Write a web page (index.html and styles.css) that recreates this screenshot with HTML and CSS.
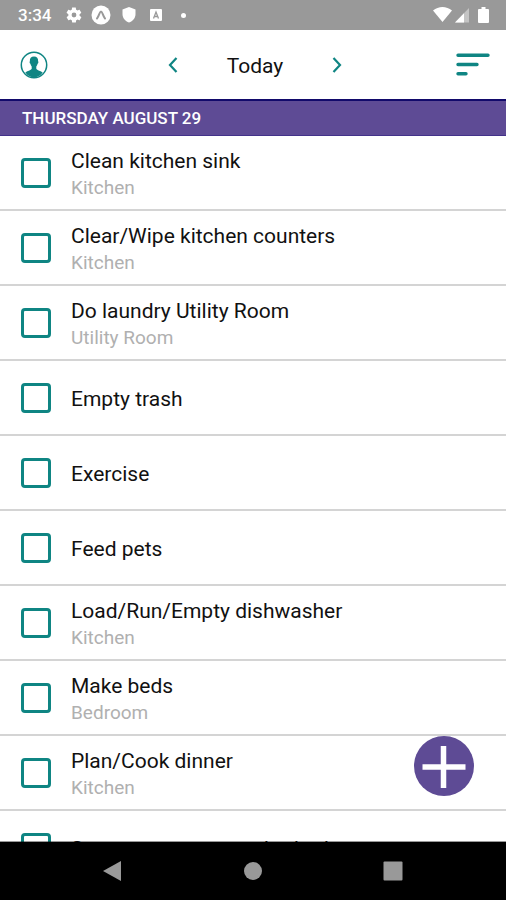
FILE: index.html
```html
<!DOCTYPE html>
<html lang="en">
<head>
  <meta charset="UTF-8" />
  <meta name="viewport" content="width=device-width, initial-scale=1.0"/>
  <title>Today</title>
  <link rel="stylesheet" href="styles.css">
</head>
<body>

  <!-- STATUS BAR -->
  <div class="status-bar">
    <span class="time">3:34</span>
    <svg class="gear" width="18" height="18" viewBox="0 0 24 24"><path fill="#fff" fill-rule="evenodd" d="M19.4 13c.1-.6.1-1.300 0-2l2.100-1.600c.2-.2.200-.4.100-.6l-2-3.500c-.1-.2-.4-.3-.6-.2l-2.500 1c-.5-.4-1.100-.7-1.700-1l-.4-2.600c0-.3-.2-.5-.5-.5h-4c-.2 0-.4.200-.5.400l-.4 2.700c-.6.200-1.200.600-1.700 1l-2.500-1c-.2-.1-.5 0-.6.200l-2 3.500c-.1.200-.1.500.1.600L4.500 11c-.1.700-.1 1.300 0 2l-2.100 1.600c-.2.200-.2.400-.1.600l2 3.500c.1.200.4.300.6.200l2.500-1c.5.400 1.100.7 1.700 1l.4 2.600c.1.300.3.500.5.500h4c.3 0 .5-.2.500-.4l.4-2.700c.6-.2 1.200-.6 1.700-1l2.500 1c.2.100.5 0 .6-.2l2-3.500c.1-.2.1-.5-.1-.6L19.400 13zM12 15.200a3.200 3.200 0 1 1 0-6.400 3.200 3.200 0 0 1 0 6.400z"/></svg>
    <svg class="expo" width="20" height="20" viewBox="0 0 20 20"><circle cx="10" cy="10" r="9.500" fill="#fff"/><path d="M6 13.500C8 11.500 8.500 6.500 10 6.500s2 5 4 7" fill="none" stroke="#999" stroke-width="2" stroke-linecap="round"/></svg>
    <svg class="shield" width="16" height="18" viewBox="0 0 16 18"><path d="M8 1l6.500 2.500V8c0 4-2.700 7.300-6.500 8.500C4.200 15.300 1.500 12 1.500 8V3.500z" fill="#fff"/></svg>
    <svg class="app" width="14" height="14" viewBox="0 0 14 14"><rect x="1" y="1" width="12" height="12" rx="1" fill="#fff"/><path d="M4.500 10.500L7 4l2.500 6.500M5.500 8.500h3" fill="none" stroke="#999" stroke-width="1.300"/></svg>
    <span class="dot"></span>
    <svg class="signals" width="58" height="18" viewBox="0 0 58 18"><path d="M1 4.500C6.500-.2 14.500-.2 20 4.500L10.500 16z" fill="#fff"/><path d="M23 16.500L37 2v14.500z" fill="#c4c4c4"/><path d="M23 16.500L32 7.200v9.300z" fill="#fff"/><path d="M49.500 1h4v2h2.500q1 0 1 1v12q0 1-1 1h-9q-1 0-1-1V4q0-1 1-1h2.500z" fill="#fff"/></svg>
  </div>

  <header>
    <button class="icon-btn" aria-label="Profile">
      <svg width="28" height="28" viewBox="0 0 28 28"><circle cx="14" cy="14" r="12.700" fill="none" stroke="#0f8583" stroke-width="1.500"/><path d="M14 5.500c-2.900 0-4.400 1.800-4.100 4.700-.6.300-.3 2.300.5 2.600.2 1.200.7 2 1.300 2.600v2.300c-.7 1.700-4.600 2.100-6.400 3.700A12 12 0 0 0 14 26.500a12 12 0 0 0 8.700-5.100c-1.800-1.600-5.700-2-6.400-3.700v-2.300c.6-.6 1.100-1.400 1.300-2.600.8-.3 1.100-2.300.5-2.600.3-2.900-1.200-4.700-4.100-4.700z" fill="#0f8583"/></svg>
    </button>
    <div class="day-picker">
      <button class="icon-btn" aria-label="Previous day">
        <svg width="10" height="18" viewBox="0 0 10 18"><path d="M8.500 2L2 9l6.500 7" fill="none" stroke="#0f8583" stroke-width="2.200"/></svg>
      </button>
      <h1>Today</h1>
      <button class="icon-btn" aria-label="Next day">
        <svg width="10" height="18" viewBox="0 0 10 18"><path d="M1.500 2L8 9l-6.500 7" fill="none" stroke="#0f8583" stroke-width="2.200"/></svg>
      </button>
    </div>
    <button class="icon-btn sort" aria-label="Sort">
      <svg width="34" height="24" viewBox="0 0 34 24"><path d="M2 2.200h30M2 11.500h19M2 20.700h8" fill="none" stroke="#0f8583" stroke-width="3.400" stroke-linecap="round"/></svg>
    </button>
  </header>

  <h2 class="date">THURSDAY AUGUST 29</h2>

  <main>
    <ul class="tasks">
      <li><label><input type="checkbox"><span class="text">Clean kitchen sink<small>Kitchen</small></span></label></li>
      <li><label><input type="checkbox"><span class="text">Clear/Wipe kitchen counters<small>Kitchen</small></span></label></li>
      <li><label><input type="checkbox"><span class="text">Do laundry Utility Room<small>Utility Room</small></span></label></li>
      <li><label><input type="checkbox"><span class="text">Empty trash</span></label></li>
      <li><label><input type="checkbox"><span class="text">Exercise</span></label></li>
      <li><label><input type="checkbox"><span class="text">Feed pets</span></label></li>
      <li><label><input type="checkbox"><span class="text">Load/Run/Empty dishwasher<small>Kitchen</small></span></label></li>
      <li><label><input type="checkbox"><span class="text">Make beds<small>Bedroom</small></span></label></li>
      <li><label><input type="checkbox"><span class="text">Plan/Cook dinner<small>Kitchen</small></span></label></li>
      <li><label><input type="checkbox"><span class="text">Sweep master room bathtub</span></label></li>
    </ul>
    <button class="add-btn" aria-label="Add task">
      <svg width="60" height="60" viewBox="0 0 60 60"><path d="M29.500 10v42M8.500 31h43" stroke="#fff" stroke-width="5.500"/></svg>
    </button>
  </main>

  <!-- SYSTEM NAVIGATION -->
  <nav class="system-nav">
    <button class="icon-btn" aria-label="Back"><svg width="20" height="22" viewBox="0 0 20 22"><path d="M0 11L18 1v20z" fill="#999"/></svg></button>
    <button class="icon-btn" aria-label="Home"><svg width="20" height="22" viewBox="0 0 20 22"><circle cx="10" cy="11" r="9" fill="#999"/></svg></button>
    <button class="icon-btn" aria-label="Recent apps"><svg width="20" height="22" viewBox="0 0 20 22"><rect x=".5" y="1.500" width="19" height="19" rx="1" fill="#999"/></svg></button>
  </nav>

</body>
</html>
```
FILE: styles.css
```css
* {
  margin: 0; padding: 0;
  box-sizing: border-box;
  font-family: Roboto, sans-serif;
}

body {
  height: 100vh;
  display: flex;
  flex-direction: column;
  overflow: hidden;
  background-color: white;
  color: #111;
}

svg {
  display: block;
}

.icon-btn {
  background: none;
  border: none;
  cursor: pointer;
}

/* Status bar */
.status-bar {
  flex: none;
  display: flex;
  align-items: center;
  height: 30px;
  padding: 0 16px 0 18px;
  background-color: #999;
  color: white;
}

.time {
  width: 47px;
  font-size: 17px;
  font-weight: 500;
  line-height: 30px;
}

.expo {
  margin-left: 8px;
}

.shield {
  margin-left: 10px;
}

.app {
  margin-left: 12px;
}

.dot {
  width: 5px;
  height: 5px;
  margin-left: 18px;
  border-radius: 50%;
  background-color: white;
}

.signals {
  margin-left: auto;
}

/* Header */
header {
  flex: none;
  display: grid;
  grid-template-columns: 1fr auto 1fr;
  justify-items: start;
  align-items: center;
  height: 69px;
  padding: 0 16px 0 20px;
}

.day-picker {
  display: flex;
  align-items: center;
  gap: 49px;
}

.sort {
  justify-self: end;
}

h1 {
  padding-top: 2px;
  font-size: 21px;
  font-weight: 400;
}

.date {
  flex: none;
  height: 37px;
  padding-left: 22px;
  border-top: 2px solid #120a6b;
  border-bottom: 1px solid #43328a;
  background-color: #5e4b95;
  color: white;
  font-size: 17px;
  font-weight: 500;
  line-height: 34px;
}

/* Task list */
main {
  flex: 1;
  min-height: 0;
  position: relative;
}

.tasks {
  height: 100%;
  overflow: hidden;
  list-style: none;
}

.tasks li {
  height: 75px;
  border-bottom: 2px solid #d4d4d4;
}

.tasks label {
  display: flex;
  align-items: center;
  gap: 20px;
  height: 100%;
  padding-left: 21px;
  cursor: pointer;
}

.tasks input {
  appearance: none;
  width: 30px;
  height: 30px;
  border: 3px solid #0f8583;
  border-radius: 4px;
}

.tasks input:checked {
  background-color: #0f8583;
}

.text {
  padding-top: 2px;
  font-size: 21px;
  line-height: 28px;
}

small {
  display: block;
  color: #b0b0b0;
  font-size: 19px;
  line-height: 26px;
}

.add-btn {
  position: absolute;
  right: 32px;
  bottom: 46px;
  width: 60px;
  height: 60px;
  border: none;
  border-radius: 50%;
  background-color: #5e4b95;
  cursor: pointer;
}

/* System navigation */
.system-nav {
  flex: none;
  position: relative;
  display: flex;
  justify-content: center;
  align-items: center;
  gap: 120px;
  height: 59px;
  margin-top: -1px;
  border-top: 1px solid rgba(0, 0, 0, 0.4);
  background-color: black;
  background-clip: padding-box;
}
```
